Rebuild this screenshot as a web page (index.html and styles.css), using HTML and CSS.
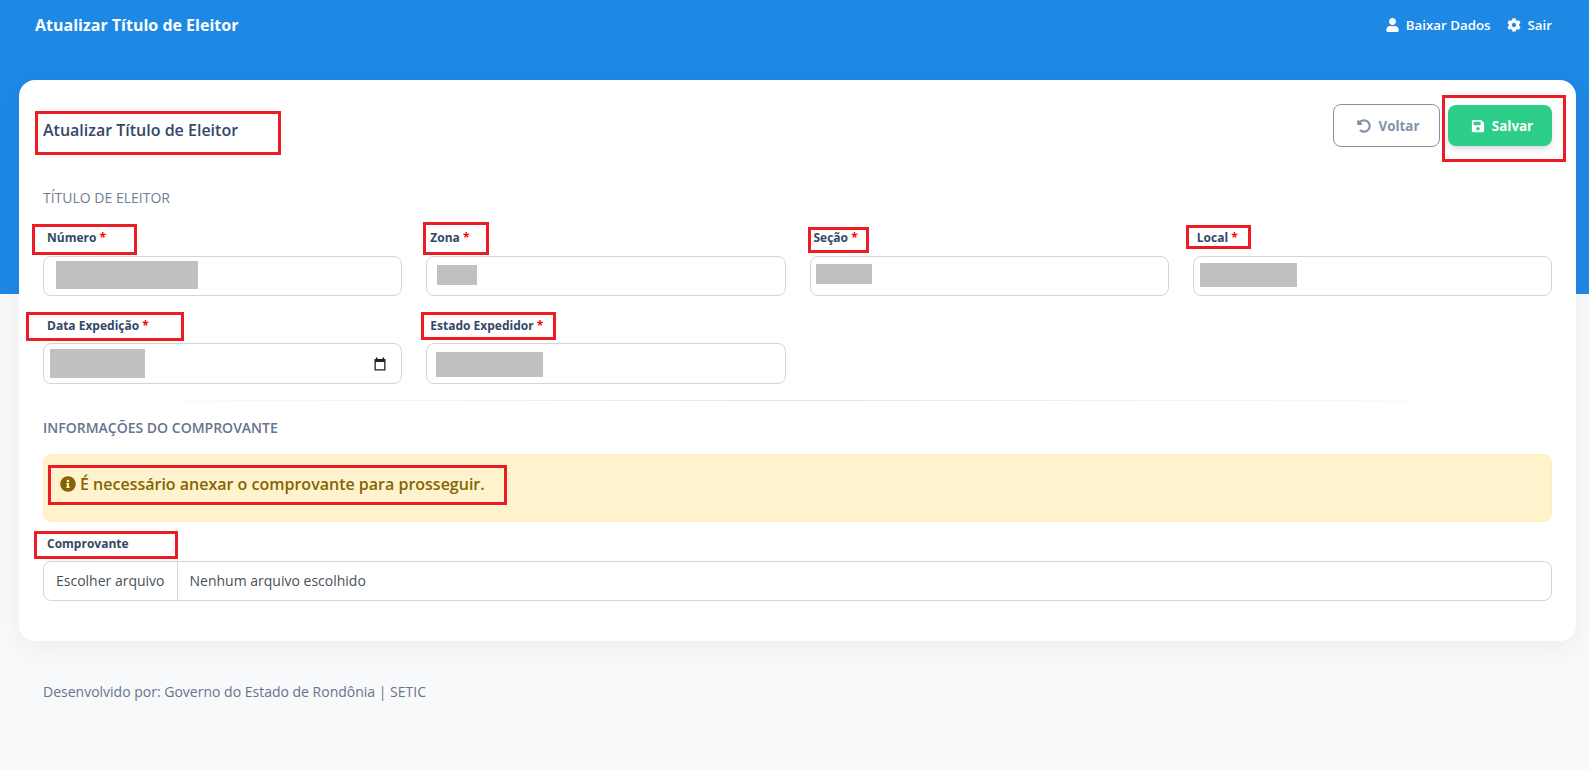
FILE: index.html
```html
<!DOCTYPE html>
<html lang="pt-BR">
<head>
<meta charset="utf-8">
<title>Atualizar Título de Eleitor</title>
<link rel="stylesheet" href="styles.css">
</head>
<body>
<header class="topbar">
  <div class="brand">Atualizar Título de Eleitor</div>
  <nav class="topnav">
    <a class="navlink"><svg class="ico ico-user" viewBox="0 0 448 512"><path d="M224 256c70.7 0 128-57.3 128-128S294.7 0 224 0 96 57.3 96 128s57.3 128 128 128zm89.6 32h-16.7c-22.2 10.2-46.9 16-72.9 16s-50.6-5.8-72.9-16h-16.7C60.2 288 0 348.2 0 422.4V464c0 26.5 21.5 48 48 48h352c26.5 0 48-21.5 48-48v-41.6c0-74.2-60.2-134.4-134.4-134.4z"/></svg>Baixar Dados</a>
    <a class="navlink"><svg class="ico ico-cog" viewBox="0 0 512 512"><path d="M487.4 315.7l-42.6-24.6c4.3-23.2 4.3-47 0-70.2l42.6-24.6c4.9-2.8 7.1-8.6 5.5-14-11.1-35.6-30-67.8-54.7-94.6-3.8-4.1-10-5.1-14.8-2.3L380.8 110c-17.9-15.4-38.5-27.3-60.8-35.1V25.8c0-5.6-3.9-10.5-9.4-11.7-36.7-8.2-74.3-7.8-109.2 0-5.5 1.2-9.4 6.1-9.4 11.7V75c-22.2 7.9-42.8 19.8-60.8 35.1L88.7 85.5c-4.9-2.8-11-1.9-14.8 2.3-24.7 26.7-43.6 58.9-54.7 94.6-1.7 5.4.6 11.2 5.5 14L67.3 221c-4.3 23.2-4.3 47 0 70.2l-42.6 24.6c-4.9 2.8-7.1 8.6-5.5 14 11.1 35.6 30 67.8 54.7 94.6 3.8 4.1 10 5.1 14.8 2.3l42.6-24.6c17.9 15.4 38.5 27.3 60.8 35.1v49.2c0 5.6 3.9 10.5 9.4 11.7 36.7 8.2 74.3 7.8 109.2 0 5.5-1.2 9.4-6.1 9.4-11.7v-49.2c22.2-7.9 42.8-19.8 60.8-35.1l42.6 24.6c4.9 2.8 11 1.9 14.8-2.3 24.7-26.7 43.6-58.9 54.7-94.6 1.5-5.5-.7-11.3-5.6-14.1zM256 336c-44.1 0-80-35.9-80-80s35.9-80 80-80 80 35.9 80 80-35.9 80-80 80z"/></svg>Sair</a>
  </nav>
</header>

<main class="card">
  <div class="card-head">
    <h1 class="card-title">Atualizar Título de Eleitor</h1>
    <div class="actions">
      <button class="btn btn-back"><svg class="ico ico-btn" viewBox="0 0 512 512"><path d="M255.545 8c-66.269.119-126.438 26.233-170.86 68.685L48.971 40.971C33.851 25.851 8 36.559 8 57.941V192c0 13.255 10.745 24 24 24h134.059c21.382 0 32.09-25.851 16.971-40.971l-41.75-41.75c30.864-28.899 70.801-44.907 113.23-45.273 92.398-.798 170.283 73.977 169.484 169.442C423.236 348.009 349.816 424 256 424c-41.127 0-79.997-14.678-110.63-41.556-4.743-4.161-11.906-3.908-16.368.553L89.34 422.659c-4.872 4.872-4.631 12.815.482 17.433C133.798 479.813 192.074 504 256 504c136.966 0 247.999-111.033 248-247.998C504.001 119.193 392.354 7.755 255.545 8z"/></svg>Voltar</button>
      <button class="btn btn-save"><svg class="ico ico-btn" viewBox="0 0 448 512"><path d="M433.941 129.941l-83.882-83.882A48 48 0 0 0 316.118 32H48C21.49 32 0 53.49 0 80v352c0 26.51 21.49 48 48 48h352c26.51 0 48-21.49 48-48V163.882a48 48 0 0 0-14.059-33.941zM224 416c-35.346 0-64-28.654-64-64 0-35.346 28.654-64 64-64s64 28.654 64 64c0 35.346-28.654 64-64 64zm96-304.52V212c0 6.627-5.373 12-12 12H76c-6.627 0-12-5.373-12-12V108c0-6.627 5.373-12 12-12h228.52c3.183 0 6.235 1.264 8.485 3.515l3.48 3.48A11.996 11.996 0 0 1 320 111.48z"/></svg>Salvar</button>
    </div>
  </div>

  <h2 class="section section-light">TÍTULO DE ELEITOR</h2>
  <div class="fields">
    <div class="field"><label class="label">Número <span class="req">*</span></label><div class="input"></div></div>
    <div class="field"><label class="label">Zona <span class="req">*</span></label><div class="input"></div></div>
    <div class="field"><label class="label">Seção <span class="req">*</span></label><div class="input"></div></div>
    <div class="field"><label class="label">Local <span class="req">*</span></label><div class="input"></div></div>
    <div class="field"><label class="label">Data Expedição <span class="req">*</span></label>
      <div class="input input-tall input-date"><svg class="cal" viewBox="0 0 14 14"><path d="M3 .5h1.5V2h5V.5H11V2h1.5v11.5h-11V2H3zM2.8 5v7.2h8.4V5z"/></svg></div></div>
    <div class="field"><label class="label">Estado Expedidor <span class="req">*</span></label><div class="input input-tall"></div></div>
  </div>

  <hr class="divider">

  <h2 class="section section-dark">INFORMAÇÕES DO COMPROVANTE</h2>
  <div class="alert"><svg class="ico ico-info" viewBox="0 0 512 512"><path d="M256 8C119.043 8 8 119.083 8 256c0 136.997 111.043 248 248 248s248-111.003 248-248C504 119.083 392.957 8 256 8zm0 110c23.196 0 42 18.804 42 42s-18.804 42-42 42-42-18.804-42-42 18.804-42 42-42zm56 254c0 6.627-5.373 12-12 12h-88c-6.627 0-12-5.373-12-12v-24c0-6.627 5.373-12 12-12h12v-64h-12c-6.627 0-12-5.373-12-12v-24c0-6.627 5.373-12 12-12h64c6.627 0 12 5.373 12 12v100h12c6.627 0 12 5.373 12 12v24z"/></svg>É necessário anexar o comprovante para prosseguir.</div>

  <label class="label label-file">Comprovante</label>
  <div class="file"><span class="file-btn">Escolher arquivo</span><span class="file-name">Nenhum arquivo escolhido</span></div>

  <div class="overlay" aria-hidden="true">
    <i class="mask mask-numero"></i>
    <i class="mask mask-zona"></i>
    <i class="mask mask-secao"></i>
    <i class="mask mask-local"></i>
    <i class="mask mask-data"></i>
    <i class="mask mask-estado"></i>
    <i class="mark mark-title"></i>
    <i class="mark mark-salvar"></i>
    <i class="mark mark-numero"></i>
    <i class="mark mark-zona"></i>
    <i class="mark mark-secao"></i>
    <i class="mark mark-local"></i>
    <i class="mark mark-data"></i>
    <i class="mark mark-estado"></i>
    <i class="mark mark-alert"></i>
    <i class="mark mark-comp"></i>
  </div>
</main>

<footer class="footer">Desenvolvido por: Governo do Estado de Rondônia | SETIC</footer>
</body>
</html>
```

FILE: styles.css
```css
* { box-sizing: border-box; }
html, body { height: 100%; }
body {
  margin: 0;
  overflow: hidden;
  font-family: "Open Sans", sans-serif;
  font-size: 14px;
  color: #344767;
  background: #f8f9fa linear-gradient(#1e88e5, #1e88e5) no-repeat 0 0 / 100% 294px;
}

.ico { fill: currentColor; flex: none; display: block; }

.topbar {
  height: 50px;
  margin-bottom: 30px;
  padding: 0 37px 0 35px;
  display: flex;
  align-items: center;
  justify-content: space-between;
  color: #fff;
}
.brand { font-size: 16px; font-weight: 700; }
.topnav { display: flex; gap: 16px; }
.navlink { display: flex; align-items: center; gap: 7px; font-size: 13.3px; font-weight: 600; color: #fff; }
.ico-user { width: 13px; height: 14px; }
.ico-cog { width: 14px; height: 14px; }

.card {
  position: relative;
  margin: 0 13px 0 19px;
  padding: 24px;
  height: 561px;
  background: #fff;
  border-radius: 16px;
  box-shadow: 0 8px 26px 0 rgba(0, 0, 0, .05);
}
.card-head { display: flex; justify-content: space-between; align-items: flex-start; height: 43px; }
.card-title { margin: 0; padding-top: 14px; font-size: 16px; line-height: 24px; font-weight: 600; color: #344767; }
.actions { display: flex; gap: 8px; }

.btn {
  display: flex;
  align-items: center;
  justify-content: center;
  gap: 7px;
  font-family: inherit;
  font-size: 13.4px;
  font-weight: 700;
  border-radius: 8px;
  padding: 0 0 0 4px;
}
.ico-btn { width: 14px; height: 14px; }
.btn-back { width: 107px; height: 43px; background: #fff; border: 1px solid #8392ab; color: #8392ab; }
.btn-save { width: 104px; height: 41px; margin-top: 1px; background: #2dce89; border: 0; color: #fff; box-shadow: 0 4px 7px -1px rgba(0, 0, 0, .11), 0 2px 4px -1px rgba(0, 0, 0, .07); }

.section { margin: 0; font-size: 14px; line-height: 21px; }
.section-light { margin-top: 40px; font-weight: 400; color: #707e96; }
.section-dark { margin-top: 16px; font-weight: 600; color: #67748e; }

.fields {
  display: grid;
  grid-template-columns: repeat(4, 1fr);
  column-gap: 24px;
  row-gap: 19px;
  margin-top: 19px;
}
.label {
  display: block;
  height: 20px;
  margin-bottom: 9px;
  padding: 2px 0 0 4px;
  font-size: 12px;
  line-height: 18px;
  font-weight: 700;
  color: #344767;
}
.req { color: #f00; }
.input {
  height: 40px;
  background: #fff;
  border: 1px solid #d2d6da;
  border-radius: 8px;
}
.input-tall { height: 41px; margin-top: -1px; }
.input-date { display: flex; align-items: center; justify-content: flex-end; padding-right: 14px; }
.cal { width: 14px; height: 14px; fill: #222; }

.divider {
  height: 1px;
  margin: 16px 0 0;
  border: 0;
  background: linear-gradient(90deg, rgba(0,0,0,0), rgba(0,0,0,.1), rgba(0,0,0,0));
}

.alert {
  display: flex;
  align-items: flex-start;
  gap: 4px;
  height: 68px;
  margin-top: 16px;
  padding: 17px 16px 0;
  background: #fff3cd;
  border: 1px solid #ffeeba;
  border-radius: 8px;
  font-size: 16px;
  line-height: 24px;
  font-weight: 600;
  color: #856404;
}
.ico-info { width: 16px; height: 16px; margin-top: 4px; }

.label-file { height: 18px; padding-top: 0; margin: 13px 0 8px; }
.file {
  display: flex;
  height: 40px;
  border: 1px solid #d2d6da;
  border-radius: 8px;
  font-size: 14px;
  line-height: 38px;
  color: #495057;
}
.file-btn { padding: 0 12px; border-right: 1px solid #d2d6da; }
.file-name { padding-left: 12px; }

.footer { margin: 40px 0 0 43px; font-size: 14px; line-height: 21px; color: #67748e; }

/* Overlays: redaction blocks and red annotation frames over the form */
.overlay { position: absolute; inset: 0; pointer-events: none; }
.mask { position: absolute; background: #c0c0c0; }
.mask-numero { left: 37px; top: 181px; width: 142px; height: 28px; }
.mask-zona { left: 418px; top: 185px; width: 40px; height: 20px; }
.mask-secao { left: 797px; top: 184px; width: 56px; height: 20px; }
.mask-local { left: 1181px; top: 183px; width: 97px; height: 24px; }
.mask-data { left: 31px; top: 269px; width: 95px; height: 29px; }
.mask-estado { left: 417px; top: 272px; width: 107px; height: 25px; }

.mark { position: absolute; border: 3px solid #ed1c24; }
.mark-title { left: 16px; top: 31px; width: 246px; height: 44px; }
.mark-salvar { left: 1423px; top: 15px; width: 124px; height: 67px; }
.mark-numero { left: 13px; top: 144px; width: 105px; height: 31px; }
.mark-zona { left: 404px; top: 142px; width: 66px; height: 33px; }
.mark-secao { left: 789px; top: 147px; width: 61px; height: 26px; }
.mark-local { left: 1167px; top: 145px; width: 65px; height: 24px; }
.mark-data { left: 7px; top: 232px; width: 158px; height: 29px; }
.mark-estado { left: 402px; top: 232px; width: 135px; height: 28px; }
.mark-alert { left: 29px; top: 385px; width: 459px; height: 40px; }
.mark-comp { left: 15px; top: 451px; width: 144px; height: 28px; }
```
